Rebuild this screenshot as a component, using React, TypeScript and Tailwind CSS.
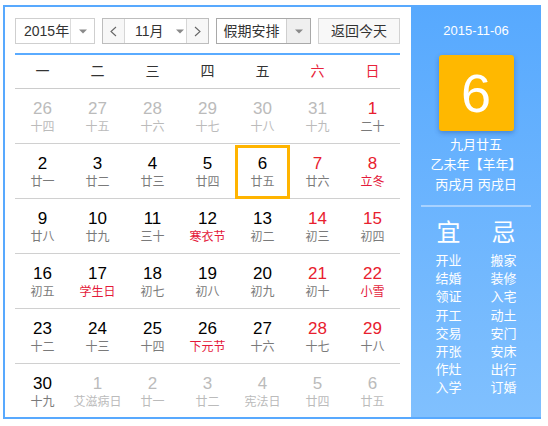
import React from "react";

type Cell = { d: number; l: string; other?: boolean; red?: boolean; lred?: boolean; sel?: boolean };

const rows: Cell[][] = [
  [
    { d: 26, l: "十四", other: true },
    { d: 27, l: "十五", other: true },
    { d: 28, l: "十六", other: true },
    { d: 29, l: "十七", other: true },
    { d: 30, l: "十八", other: true },
    { d: 31, l: "十九", other: true },
    { d: 1, l: "二十", red: true },
  ],
  [
    { d: 2, l: "廿一" },
    { d: 3, l: "廿二" },
    { d: 4, l: "廿三" },
    { d: 5, l: "廿四" },
    { d: 6, l: "廿五", sel: true },
    { d: 7, l: "廿六", red: true },
    { d: 8, l: "立冬", red: true, lred: true },
  ],
  [
    { d: 9, l: "廿八" },
    { d: 10, l: "廿九" },
    { d: 11, l: "三十" },
    { d: 12, l: "寒衣节", lred: true },
    { d: 13, l: "初二" },
    { d: 14, l: "初三", red: true },
    { d: 15, l: "初四", red: true },
  ],
  [
    { d: 16, l: "初五" },
    { d: 17, l: "学生日", lred: true },
    { d: 18, l: "初七" },
    { d: 19, l: "初八" },
    { d: 20, l: "初九" },
    { d: 21, l: "初十", red: true },
    { d: 22, l: "小雪", red: true, lred: true },
  ],
  [
    { d: 23, l: "十二" },
    { d: 24, l: "十三" },
    { d: 25, l: "十四" },
    { d: 26, l: "下元节", lred: true },
    { d: 27, l: "十六" },
    { d: 28, l: "十七", red: true },
    { d: 29, l: "十八", red: true },
  ],
  [
    { d: 30, l: "十九" },
    { d: 1, l: "艾滋病日", other: true },
    { d: 2, l: "廿一", other: true },
    { d: 3, l: "廿二", other: true },
    { d: 4, l: "宪法日", other: true },
    { d: 5, l: "廿四", other: true },
    { d: 6, l: "廿五", other: true },
  ],
];

const yi = ["开业", "结婚", "领证", "开工", "交易", "开张", "作灶", "入学"];
const ji = ["搬家", "装修", "入宅", "动土", "安门", "安床", "出行", "订婚"];

function Tri() {
  return (
    <svg width="8" height="5" viewBox="0 0 8 5">
      <path d="M0 0.5 L8 0.5 L4 4.5 Z" fill="#8a8a8a" />
    </svg>
  );
}

function Chev({ dir }: { dir: "l" | "r" }) {
  return (
    <svg width="7" height="11" viewBox="0 0 7 11">
      <polyline
        points={dir === "l" ? "6,1 1,5.5 6,10" : "1,1 6,5.5 1,10"}
        fill="none"
        stroke="#666"
        strokeWidth="1.1"
      />
    </svg>
  );
}

export default function App() {
  return (
    <div className="w-[548px] h-[426px] bg-white pl-[3px] pt-[5px] font-['Liberation_Sans','Noto_Sans_CJK_SC',sans-serif]">
      <div className="w-[538px] h-[414px] border-l-2 border-t-2 border-b-2 border-[#58a9fe] flex">
        {/* left */}
        <div className="w-[406px] pl-[10px] pr-[11px] pt-[11px] flex flex-col">
          <div className="flex h-[26px] text-[14px] text-[#333]">
            <div className="w-[80px] h-[26px] border border-[#cfcfcf] flex">
              <div className="w-[54px] shrink-0 flex items-center pl-[8px] whitespace-nowrap">2015年</div>
              <div className="flex-1 border-l border-[#dcdcdc] flex items-center justify-center">
                <Tri />
              </div>
            </div>
            <div className="ml-[7px] w-[107px] h-[26px] border border-[#bdbdbd] flex">
              <div className="w-[22px] bg-[#f7f7f7] border-r border-[#d6d6d6] flex items-center justify-center">
                <Chev dir="l" />
              </div>
              <div className="flex-1 flex items-center pl-[10px] gap-[12px] whitespace-nowrap">
                <span>11月</span>
                <Tri />
              </div>
              <div className="w-[22px] bg-[#f7f7f7] border-l border-[#d6d6d6] flex items-center justify-center">
                <Chev dir="r" />
              </div>
            </div>
            <div className="ml-[7px] w-[95px] h-[26px] border border-[#a9a9a9] flex">
              <div className="w-[69px] flex items-center justify-center whitespace-nowrap">假期安排</div>
              <div className="flex-1 bg-[#efefef] border-l border-[#cfcfcf] flex items-center justify-center">
                <Tri />
              </div>
            </div>
            <div className="ml-[7px] w-[82px] h-[26px] border border-[#d2d2d2] bg-[#f8f8f8] flex items-center justify-center whitespace-nowrap">
              返回今天
            </div>
          </div>
          <div className="mt-[9px] h-[2px] bg-[#5aabff]" />
          <div className="grid grid-cols-7 h-[34px] border-b border-[#cccccc] text-[14px]">
            {["一", "二", "三", "四", "五", "六", "日"].map((w, i) => (
              <div
                key={w}
                className={`flex items-center justify-center ${i >= 5 ? "text-[#e8233a]" : "text-[#333]"}`}
              >
                {w}
              </div>
            ))}
          </div>
          {rows.map((r, ri) => (
            <div
              key={ri}
              className={`grid grid-cols-7 ${ri < 5 ? "h-[55px] border-b border-[#d0d0d0]" : "h-[53px]"}`}
            >
              {r.map((c, ci) => {
                const numColor = c.other ? "text-[#bbbbbb]" : c.red ? "text-[#e8202e]" : "text-black";
                const lColor = c.other ? "text-[#bbbbbb]" : c.lred ? "text-[#e4193a]" : "text-[#7a7a7a]";
                return (
                  <div key={ci} className="relative flex flex-col items-center pt-[10px]">
                    <div className={`text-[17px] leading-[20px] ${numColor}`}>{c.d}</div>
                    <div className={`text-[12px] leading-[16px] whitespace-nowrap ${lColor}`}>{c.l}</div>
                    {c.sel && (
                      <div className="absolute left-0 right-0 top-[1px] bottom-[-1px] border-[3px] border-[#ffb400]" />
                    )}
                  </div>
                );
              })}
            </div>
          ))}
        </div>
        {/* right */}
        <div className="w-[130px] bg-gradient-to-b from-[#57a9fe] to-[#80c0fe] flex flex-col items-center text-white">
          <div className="mt-[14px] text-[13px] leading-[20px]">2015-11-06</div>
          <div className="mt-[14px] w-[75px] h-[76px] bg-[#ffb800] rounded-[3px] shadow-[0_2px_5px_rgba(0,40,120,0.3)] flex items-center justify-center text-[54px] leading-none">
            6
          </div>
          <div className="mt-[4px] text-[13px] leading-[20px] text-center whitespace-nowrap">
            <div>九月廿五</div>
            <div>乙未年【羊年】</div>
            <div>丙戌月 丙戌日</div>
          </div>
          <div className="mt-[10px] w-[110px] h-[2px] bg-[#a8d2ff]" />
          <div className="mt-[12px] flex gap-[5px]">
            <div className="w-[50px] flex flex-col items-center">
              <div className="text-[24px] leading-[28px]">宜</div>
              <div className="mt-[5px] text-[13px] leading-[18.2px] flex flex-col items-center">
                {yi.map((t) => (
                  <div key={t}>{t}</div>
                ))}
              </div>
            </div>
            <div className="w-[50px] flex flex-col items-center">
              <div className="text-[24px] leading-[28px]">忌</div>
              <div className="mt-[5px] text-[13px] leading-[18.2px] flex flex-col items-center">
                {ji.map((t) => (
                  <div key={t}>{t}</div>
                ))}
              </div>
            </div>
          </div>
        </div>
      </div>
    </div>
  );
}
